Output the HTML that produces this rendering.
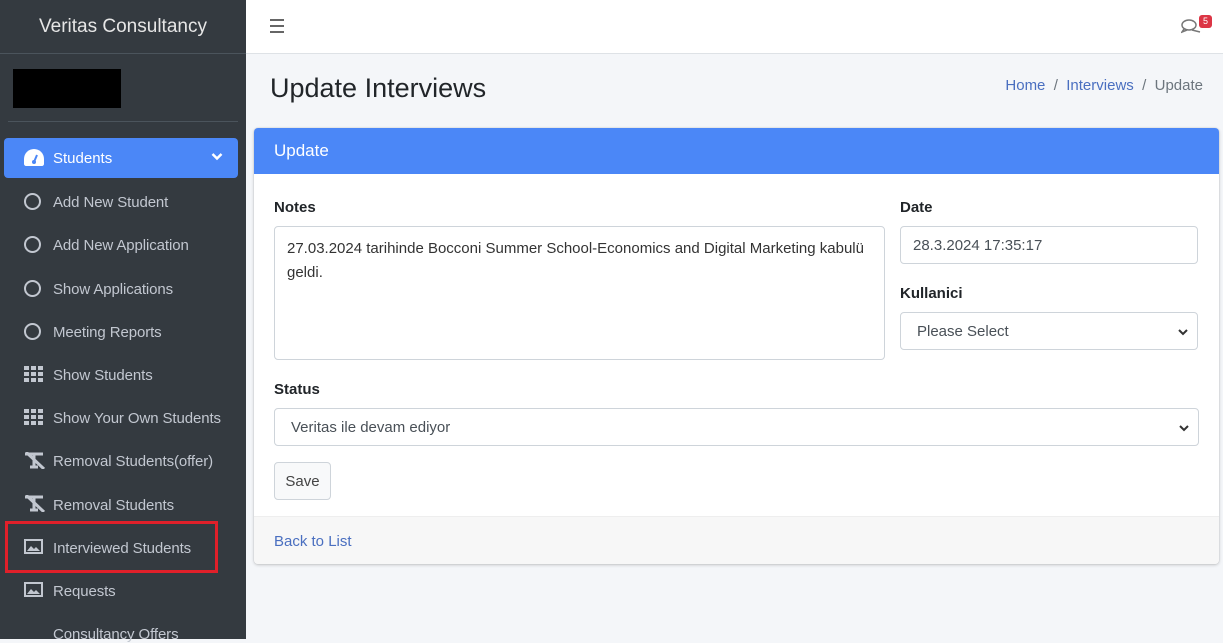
<!DOCTYPE html>
<html><head><meta charset="utf-8"><style>
*{box-sizing:border-box;margin:0;padding:0}
body{width:1223px;height:639px;overflow:hidden;font-family:"Liberation Sans",sans-serif;background:#f4f6f9;position:relative;font-size:15px}
#sb{position:absolute;left:0;top:0;width:246px;height:639px;background:#343a40;color:#c2c7d0}
.brand{height:54px;border-bottom:1px solid #4b545c;color:#e6e6e6;font-size:19px;text-align:center;line-height:54px}
.blk{position:absolute;left:13px;top:69px;width:108px;height:39px;background:#000}
.div{position:absolute;left:8px;right:8px;top:121px;border-top:1px solid #4b545c}
.act{position:absolute;left:4px;top:138px;width:234px;height:40px;background:#4b87f7;border-radius:4px;color:#fff;line-height:42px;padding-left:49px}
.act .chev{position:absolute;right:15px;top:14px}
.it{position:absolute;left:53px;color:#c2c7d0;font-size:15px;letter-spacing:-0.1px}
.ic{position:absolute;left:24px}
.circ{width:17px;height:17px;border:2px solid #c2c7d0;border-radius:50%}
.red{position:absolute;left:5px;top:521px;width:213px;height:52px;border:3px solid #e0202a}
#top{position:absolute;left:246px;top:0;right:0;height:54px;background:#fff;border-bottom:1px solid #dee2e6}
h1{position:absolute;left:270px;top:73px;font-weight:400;font-size:27px;color:#212529}
.bc{position:absolute;right:20px;top:77px;color:#6c757d;font-size:15px}
.bc a{color:#4a6fc0;text-decoration:none}
.card{position:absolute;left:254px;top:128px;width:965px;height:436px;background:#fff;border-radius:4px;box-shadow:0 0 1px rgba(0,0,0,.2),0 1px 3px rgba(0,0,0,.2);overflow:hidden}
.ch{height:46px;background:#4b87f7;color:#fff;font-size:17px;line-height:46px;padding-left:20px}
.cf{position:absolute;left:0;right:0;bottom:0;height:48px;background:#f7f7f7;border-top:1px solid #eee;padding-left:20px;line-height:50px;color:#4a6fc0}
.lbl{position:absolute;font-weight:bold;font-size:15px;color:#212529}
.in{position:absolute;border:1px solid #ced4da;border-radius:4px;background:#fff;font-size:15px;color:#495057;padding:0 16px}
</style></head><body>
<div id="sb">
<div class="brand">Veritas Consultancy</div>
<div class="blk"></div><div class="div"></div>
<div class="act"><svg style="position:absolute;left:19px;top:10px" width="22" height="19" viewBox="0 0 22 19"><path d="M11 1A10 10 0 0 0 1 11v5c0 1 1 2 2 2h16c1 0 2-1 2-2v-5A10 10 0 0 0 11 1z" fill="#fff"/><path d="M11 14l3-7" stroke="#4b87f7" stroke-width="2"/><circle cx="11" cy="14" r="2" fill="#4b87f7"/></svg>Students<svg class="chev" width="12" height="9"><path d="M1.5 2l4.5 4.5L10.5 2" stroke="#fff" stroke-width="2.5" fill="none"/></svg></div>
<div class="ic circ" style="top:193px"></div><div class="it" style="top:194px">Add New Student</div>
<div class="ic circ" style="top:236px"></div><div class="it" style="top:237px">Add New Application</div>
<div class="ic circ" style="top:280px"></div><div class="it" style="top:281px">Show Applications</div>
<div class="ic circ" style="top:323px"></div><div class="it" style="top:324px">Meeting Reports</div>
<svg class="ic" style="top:366px" width="19" height="16"><g fill="#c2c7d0"><rect x="0" y="0" width="5" height="4"/><rect x="7" y="0" width="5" height="4"/><rect x="14" y="0" width="5" height="4"/><rect x="0" y="6" width="5" height="4"/><rect x="7" y="6" width="5" height="4"/><rect x="14" y="6" width="5" height="4"/><rect x="0" y="12" width="5" height="4"/><rect x="7" y="12" width="5" height="4"/><rect x="14" y="12" width="5" height="4"/></g></svg><div class="it" style="top:367px">Show Students</div>
<svg class="ic" style="top:409px" width="19" height="16"><g fill="#c2c7d0"><rect x="0" y="0" width="5" height="4"/><rect x="7" y="0" width="5" height="4"/><rect x="14" y="0" width="5" height="4"/><rect x="0" y="6" width="5" height="4"/><rect x="7" y="6" width="5" height="4"/><rect x="14" y="6" width="5" height="4"/><rect x="0" y="12" width="5" height="4"/><rect x="7" y="12" width="5" height="4"/><rect x="14" y="12" width="5" height="4"/></g></svg><div class="it" style="top:410px">Show Your Own Students</div>
<svg class="ic" style="top:452px" width="22" height="17"><path d="M1 2h18M10 2v13M6 15h8M2 0l18 17" stroke="#c2c7d0" stroke-width="3" fill="none"/></svg><div class="it" style="top:453px">Removal Students(offer)</div>
<svg class="ic" style="top:495px" width="22" height="17"><path d="M1 2h18M10 2v13M6 15h8M2 0l18 17" stroke="#c2c7d0" stroke-width="3" fill="none"/></svg><div class="it" style="top:497px">Removal Students</div>
<svg class="ic" style="top:539px" width="19" height="15"><rect x="1" y="1" width="17" height="13" stroke="#c2c7d0" stroke-width="2" fill="none"/><path d="M3 12l4-5 3 3 2-2 4 4z" fill="#c2c7d0"/></svg><div class="it" style="top:540px">Interviewed Students</div>
<div class="red"></div>
<svg class="ic" style="top:582px" width="19" height="15"><rect x="1" y="1" width="17" height="13" stroke="#c2c7d0" stroke-width="2" fill="none"/><path d="M3 12l4-5 3 3 2-2 4 4z" fill="#c2c7d0"/></svg><div class="it" style="top:583px">Requests</div>
<div class="it" style="top:626px">Consultancy Offers</div>
</div>
<div id="top">
<div style="position:absolute;left:24px;top:19px;width:14px"><div style="height:2px;background:#666;margin-bottom:4px"></div><div style="height:2px;background:#666;margin-bottom:4px"></div><div style="height:2px;background:#666"></div></div>
<svg style="position:absolute;left:935px;top:18px" width="20" height="16"><ellipse cx="8" cy="7" rx="7" ry="5" stroke="#777" stroke-width="1.5" fill="none"/><path d="M3 11l-2 3 5-2M11 12l8 2" stroke="#777" stroke-width="1.5" fill="none"/></svg>
<div style="position:absolute;left:953px;top:15px;width:13px;height:13px;background:#dc3545;border-radius:3px;color:#fff;font-size:9px;text-align:center;line-height:13px">5</div>
</div>
<h1>Update Interviews</h1>
<div class="bc"><a>Home</a> &nbsp;/&nbsp; <a>Interviews</a> &nbsp;/&nbsp; Update</div>
<div class="card">
<div class="ch">Update</div>
<div class="lbl" style="left:20px;top:71px">Notes</div>
<div class="in" style="left:20px;top:98px;width:611px;height:134px;padding:10px 12px;line-height:24px;color:#333">27.03.2024 tarihinde Bocconi Summer School-Economics and Digital Marketing kabulü geldi.</div>
<div class="lbl" style="left:646px;top:71px">Date</div>
<div class="in" style="left:646px;top:98px;width:298px;height:38px;line-height:38px;padding-left:12px">28.3.2024 17:35:17</div>
<div class="lbl" style="left:646px;top:157px">Kullanici</div>
<div class="in" style="left:646px;top:184px;width:298px;height:38px;line-height:38px">Please Select<svg style="position:absolute;right:9px;top:15px" width="10" height="8"><path d="M1 2l4 4 4-4" stroke="#333" stroke-width="2" fill="none"/></svg></div>
<div class="lbl" style="left:20px;top:253px">Status</div>
<div class="in" style="left:20px;top:280px;width:925px;height:38px;line-height:38px">Veritas ile devam ediyor<svg style="position:absolute;right:9px;top:15px" width="10" height="8"><path d="M1 2l4 4 4-4" stroke="#333" stroke-width="2" fill="none"/></svg></div>
<div class="in" style="left:20px;top:334px;width:57px;height:38px;line-height:38px;padding:0;text-align:center;background:#f8f9fa;color:#444">Save</div>
<div class="cf">Back to List</div>
</div>
</body></html>
